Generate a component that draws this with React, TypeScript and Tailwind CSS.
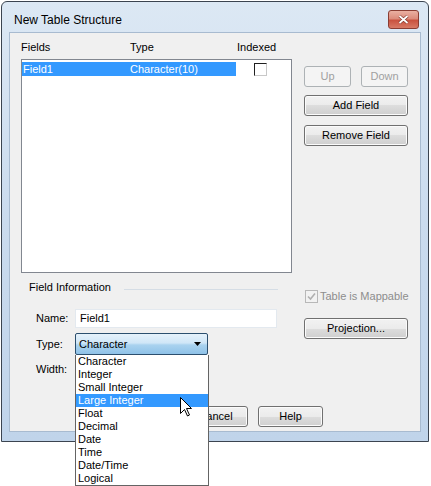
import React from "react";

const font = "font-['Tahoma','Liberation_Sans',Arial,sans-serif]";

const btn =
  "flex items-center justify-center h-[21px] rounded-[3px] border border-[#707070] bg-[linear-gradient(to_bottom,#f2f2f2_0%,#ebebeb_50%,#dddddd_50%,#cfcfcf_100%)] shadow-[inset_0_0_0_1px_#fbfbfb] text-[11px] text-black";

const btnDisabled =
  "flex items-center justify-center h-[21px] rounded-[3px] border border-[#adb2b5] bg-[#f4f4f4] text-[11px] text-[#a0a0a0]";

const typeOptions = [
  "Character",
  "Integer",
  "Small Integer",
  "Large Integer",
  "Float",
  "Decimal",
  "Date",
  "Time",
  "Date/Time",
  "Logical",
];

function Checkbox({ checked, disabled }: { checked?: boolean; disabled?: boolean }) {
  return (
    <div
      className={`flex h-[13px] w-[13px] shrink-0 items-center justify-center border ${
        disabled ? "border-[#b8b8b8] bg-[#f2f2f2]" : "border-[#1f1f1f] border-r-[#c8c8c8] border-b-[#c8c8c8] bg-white"
      }`}
    >
      {checked && (
        <svg width="9" height="9" viewBox="0 0 9 9">
          <path d="M1 4.5 L3.5 7 L8 1.5" fill="none" stroke="#b0b0b0" strokeWidth="1.6" />
        </svg>
      )}
    </div>
  );
}

export default function App() {
  return (
    <div className={`relative h-[486px] w-[431px] overflow-hidden bg-white ${font}`}>
      {/* Window frame */}
      <div className="ml-[1px] mt-[1px] h-[441px] w-[428px] rounded-t-[6px] border border-[#3b4450] bg-linear-to-b from-[#dce8f4] via-[#cadbee] to-[#c0d4ea]">
        {/* Title bar */}
        <div className="flex h-[30px] items-start justify-between">
          <span className="ml-[12px] mt-[11px] text-[12px] leading-[14px] text-black">New Table Structure</span>
          <div className="mr-[9px] mt-[8px] flex h-[19px] w-[31px] items-center justify-center rounded-[3px] border border-[#8a3d33] bg-[linear-gradient(to_bottom,#eab0a2_0%,#dc8c7c_45%,#c9523f_55%,#d87a66_100%)]">
            <svg width="11" height="9" viewBox="0 0 11 9">
              <path d="M1.5 1 L9.5 8 M9.5 1 L1.5 8" stroke="#7a3026" strokeWidth="3" />
              <path d="M1.5 1 L9.5 8 M9.5 1 L1.5 8" stroke="#ffffff" strokeWidth="1.8" />
            </svg>
          </div>
        </div>

        {/* Client area */}
        <div className="mx-[7px] h-[400px] border border-[#a8bbd0] bg-[#f0f0f0] text-[11px] leading-[13px] text-black">
          <div className="flex items-start">
            {/* Left column */}
            <div className="ml-[11px] w-[271px]">
              <div className="flex pt-[8px]">
                <span className="w-[109px]">Fields</span>
                <span className="w-[107px]">Type</span>
                <span>Indexed</span>
              </div>

              <div className="mt-[5px] h-[214px] border border-[#828790] bg-white">
                <div className="mt-[2px] flex items-start">
                  <div className="flex h-[14px] w-[214px] items-center bg-[#3399ff] text-white">
                    <span className="w-[108px] pl-[1px]">Field1</span>
                    <span>Character(10)</span>
                  </div>
                  <div className="ml-[18px] mt-[1px]">
                    <Checkbox />
                  </div>
                </div>
              </div>

              <div className="mt-[8px] flex items-center">
                <span className="ml-[8px]">Field Information</span>
                <div className="ml-[13px] mr-[14px] mt-[3px] h-px flex-1 bg-[#d5dde5]" />
              </div>

              <div className="mt-[15px] flex items-center">
                <span className="ml-[15px] w-[39px]">Name:</span>
                <div className="flex h-[19px] w-[202px] items-center border border-[#e3e9ef] bg-white pl-[4px]">Field1</div>
              </div>

              <div className="mt-[5px] flex items-center">
                <span className="ml-[15px] w-[39px]">Type:</span>
                <div className="flex h-[22px] w-[133px] items-center justify-between rounded-[2px] border border-[#2c4f6e] bg-[linear-gradient(to_bottom,#e6f2fb_0%,#cfe6f7_45%,#a9d2ef_55%,#8fc2e8_100%)] pl-[3px] pr-[6px]">
                  <span>Character</span>
                  <svg width="7" height="4" viewBox="0 0 7 4">
                    <path d="M0 0 H7 L3.5 4 Z" fill="#000" />
                  </svg>
                </div>
              </div>

              <div className="mt-[8px] flex">
                <span className="ml-[15px]">Width:</span>
              </div>
            </div>

            {/* Right column */}
            <div className="ml-[12px] flex w-[104px] flex-col">
              <div className="mt-[33px] flex justify-between">
                <div className={`${btnDisabled} w-[47px]`}>Up</div>
                <div className={`${btnDisabled} w-[47px]`}>Down</div>
              </div>
              <div className={`${btn} mt-[8px] w-[104px] border-[#3c7fb1] shadow-[inset_0_0_0_1px_#9ee0fb]`}>Add Field</div>
              <div className={`${btn} mt-[9px] w-[104px]`}>Remove Field</div>

              <div className="ml-[1px] mt-[144px] flex items-center whitespace-nowrap">
                <Checkbox checked disabled />
                <span className="ml-[2px] text-[#8d8d8d]">Table is Mappable</span>
              </div>
              <div className={`${btn} mt-[15px] w-[104px]`}>Projection...</div>
            </div>
          </div>

          {/* Bottom buttons */}
          <div className="ml-[98px] mt-[30px] flex gap-[10px]">
            <div className={`${btn} w-[65px]`}>OK</div>
            <div className={`${btn} w-[65px]`}>Cancel</div>
            <div className={`${btn} w-[65px]`}>Help</div>
          </div>
        </div>
      </div>

      {/* Open dropdown list */}
      <div className="absolute left-[75px] top-[355px] w-[134px] border border-t-0 border-[#646464] bg-white text-[11px] leading-[13px] text-black">
        {typeOptions.map((opt) => (
          <div
            key={opt}
            className={`h-[13px] pl-[2px] ${opt === "Large Integer" ? "bg-[#3399ff] text-white" : ""}`}
          >
            {opt}
          </div>
        ))}
      </div>

      {/* Mouse cursor */}
      <svg className="absolute left-[180px] top-[397px]" width="13" height="20" viewBox="0 0 13 20">
        <path d="M0.5 0.5 L0.5 16.5 L4.5 12.5 L7.5 19 L9.5 18 L6.5 11.5 L11.5 11.5 Z" fill="#fff" stroke="#000" strokeWidth="1" />
      </svg>
    </div>
  );
}
